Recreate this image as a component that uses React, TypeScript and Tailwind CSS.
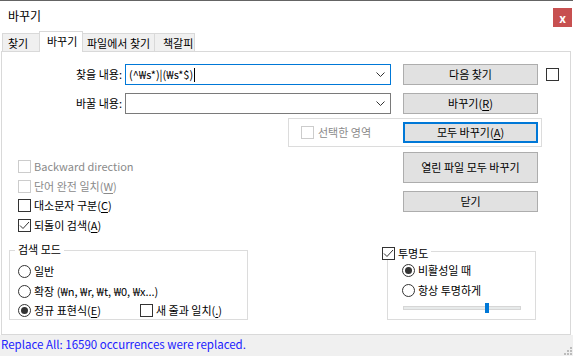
const font = "font-['Noto_Sans_CJK_KR',_'Noto_Sans',_sans-serif]";

function Check({ checked = false, disabled = false }: { checked?: boolean; disabled?: boolean }) {
  return (
    <span
      className={`flex h-[13px] w-[13px] shrink-0 items-center justify-center border bg-white ${
        disabled ? "border-[#cccccc]" : "border-[#333333]"
      }`}
    >
      {checked && (
        <svg width="11" height="11" viewBox="0 0 11 11">
          <polyline points="1,5.5 4,8.5 10,2" fill="none" stroke="#333" strokeWidth="1" />
        </svg>
      )}
    </span>
  );
}

function Radio({ on = false }: { on?: boolean }) {
  return (
    <span className="flex h-[13px] w-[13px] shrink-0 items-center justify-center rounded-full border border-[#333333] bg-white">
      {on && <span className="h-[7px] w-[7px] rounded-full bg-[#333333]" />}
    </span>
  );
}

function Btn({ children, tall = false, primary = false }: { children: React.ReactNode; tall?: boolean; primary?: boolean }) {
  return (
    <div
      className={`flex w-[135px] shrink-0 items-center justify-center bg-[#e1e1e1] text-black ${
        tall ? "h-[31px]" : "h-[21px]"
      } ${primary ? "border-2 border-[#0078d7]" : "border border-[#adadad]"}`}
    >
      {children}
    </div>
  );
}

function Chevron() {
  return (
    <svg width="9" height="5" viewBox="0 0 9 5" className="mr-[5px]">
      <polyline points="0.5,0.5 4.5,4.5 8.5,0.5" fill="none" stroke="#333" strokeWidth="1" />
    </svg>
  );
}

function U({ children }: { children: React.ReactNode }) {
  return <span className="underline underline-offset-2">{children}</span>;
}

// the backslash shows as a won sign in the Korean UI font
function W() {
  return <span className="font-['Noto_Sans',_sans-serif]">₩</span>;
}

export default function App() {
  return (
    <div className={`${font} relative h-[356px] w-[573px] overflow-hidden border-t border-[#646464] bg-white text-[11px] leading-none text-black`}>
      {/* title bar */}
      <div className="flex h-[30px] items-start justify-between">
        <span className="ml-[8px] mt-[9px] text-[12px]">바꾸기</span>
        <div className="mr-[1px] mt-[7px] flex h-[19px] w-[19px] items-center justify-center bg-[#c75050] text-[12px] font-bold text-white">
          x
        </div>
      </div>

      {/* tabs */}
      <div className="flex h-[20px] items-end pl-[2px]">
        <div className="flex h-[18px] w-[38px] items-center border border-b-0 border-[#d9d9d9] bg-[#f0f0f0] pl-[5px] pt-[1px]">찾기</div>
        <div className="relative z-10 -mb-px -ml-px flex h-[21px] w-[44px] items-start border border-b-0 border-[#d9d9d9] bg-white pl-[7px] pt-[4px]">바꾸기</div>
        <div className="-ml-px flex h-[18px] w-[73px] items-center border border-b-0 border-[#d9d9d9] bg-[#f0f0f0] pl-[4px] pt-[1px]">파일에서 찾기</div>
        <div className="-ml-px flex h-[18px] w-[41px] items-center border border-b-0 border-[#d9d9d9] bg-[#f0f0f0] pl-[8px] pt-[1px]">책갈피</div>
      </div>

      {/* panel */}
      <div className="ml-[1px] h-[284px] w-[570px] border border-[#d9d9d9] bg-white">
        {/* find row */}
        <div className="mt-[12px] flex h-[21px] items-center">
          <span className="w-[120px] text-right">찾을 내용:</span>
          <div className="ml-[3px] flex h-[21px] w-[266px] items-center justify-between border border-[#0078d7] bg-white">
            <span className="ml-[3px] flex items-center">
              (^<W />s*)|(<W />s*$)<span className="ml-[1px] inline-block h-[14px] w-px bg-black" />
            </span>
            <Chevron />
          </div>
          <div className="ml-[12px]">
            <Btn>다음 찾기</Btn>
          </div>
          <div className="ml-[8px]">
            <Check />
          </div>
        </div>

        {/* replace row */}
        <div className="mt-[8px] flex h-[21px] items-center">
          <span className="w-[120px] text-right">바꿀 내용:</span>
          <div className="ml-[3px] flex h-[21px] w-[266px] items-center justify-end border border-[#7a7a7a] bg-white">
            <Chevron />
          </div>
          <div className="ml-[12px]">
            <Btn>
              바꾸기(<U>R</U>)
            </Btn>
          </div>
        </div>

        {/* in selection group */}
        <div className="ml-[286px] mt-[4px] flex h-[29px] w-[254px] items-center border border-[#dcdcdc]">
          <div className="ml-[12px] flex items-center gap-[4px] text-[#8a8a8a]">
            <Check disabled />
            <span>선택한 영역</span>
          </div>
          <div className="ml-auto mr-[3px]">
            <Btn primary>
              모두 바꾸기(<U>A</U>)
            </Btn>
          </div>
        </div>

        {/* options + buttons */}
        <div className="flex h-[98px]">
          <div className="flex w-[401px] flex-col pl-[16px] pt-[10px]">
            <div className="flex h-[19.5px] items-center gap-[3px] text-[#8a8a8a]">
              <Check disabled />
              <span>Backward direction</span>
            </div>
            <div className="flex h-[19.5px] items-center gap-[3px] text-[#8a8a8a]">
              <Check disabled />
              <span>
                단어 완전 일치(<U>W</U>)
              </span>
            </div>
            <div className="flex h-[19.5px] items-center gap-[3px]">
              <Check />
              <span>
                대소문자 구분(<U>C</U>)
              </span>
            </div>
            <div className="flex h-[19.5px] items-center gap-[3px]">
              <Check checked />
              <span>
                되돌이 검색(<U>A</U>)
              </span>
            </div>
          </div>
          <div className="flex flex-col gap-[8px] pt-[5px]">
            <Btn tall>열린 파일 모두 바꾸기</Btn>
            <Btn>닫기</Btn>
          </div>
        </div>

        {/* bottom groups */}
        <div className="mt-[5px] flex items-start">
          <div className="relative ml-[7px] h-[70px] w-[239px] border border-[#dcdcdc] pl-[8px] pt-[11px]">
            <span className="absolute -top-[7px] left-[5px] bg-white px-[3px]">검색 모드</span>
            <div className="flex h-[19.5px] items-center gap-[3px]">
              <Radio />
              <span>일반</span>
            </div>
            <div className="flex h-[19.5px] items-center gap-[3px]">
              <Radio />
              <span>
                확장 (<W />n, <W />r, <W />t, <W />0, <W />x...)
              </span>
            </div>
            <div className="flex h-[19.5px] items-center">
              <div className="flex w-[122px] items-center gap-[3px]">
                <Radio on />
                <span>
                  정규 표현식(<U>E</U>)
                </span>
              </div>
              <div className="flex items-center gap-[3px]">
                <Check />
                <span>
                  새 줄과 일치(<U>.</U>)
                </span>
              </div>
            </div>
          </div>

          <div className="relative ml-[139px] mt-[1px] h-[69px] w-[149px] border border-[#dcdcdc] pl-[14px] pt-[9px]">
            <div className="absolute -left-[6px] -top-[5px] flex items-center gap-[3px] bg-white pr-[3px]">
              <Check checked />
              <span>투명도</span>
            </div>
            <div className="flex h-[19.5px] items-center gap-[3px]">
              <Radio on />
              <span>비활성일 때</span>
            </div>
            <div className="flex h-[19.5px] items-center gap-[3px]">
              <Radio />
              <span>항상 투명하게</span>
            </div>
            <div className="relative ml-[1px] mt-[3px] flex h-[10px] w-[118px] items-center">
              <div className="h-[4px] w-full border border-[#d6d6d6] bg-[#e7eaea]" />
              <div className="absolute left-[82px] top-0 h-[10px] w-[4px] bg-[#0078d7]" />
            </div>
          </div>
        </div>
      </div>

      {/* status bar */}
      <div className="relative flex h-[21px] items-center bg-[#f0f0f0] pb-[2px] pl-[1px] text-[11.5px] text-[#2020ff]">
        Replace All: 16590 occurrences were replaced.
        <svg width="9" height="9" viewBox="0 0 9 9" className="absolute bottom-[1px] right-[1px]">
          <rect x="7" y="1" width="2" height="2" fill="#bcbcbc" />
          <rect x="4" y="4" width="2" height="2" fill="#bcbcbc" />
          <rect x="7" y="4" width="2" height="2" fill="#bcbcbc" />
          <rect x="1" y="7" width="2" height="2" fill="#bcbcbc" />
          <rect x="4" y="7" width="2" height="2" fill="#bcbcbc" />
          <rect x="7" y="7" width="2" height="2" fill="#bcbcbc" />
        </svg>
      </div>
    </div>
  );
}
